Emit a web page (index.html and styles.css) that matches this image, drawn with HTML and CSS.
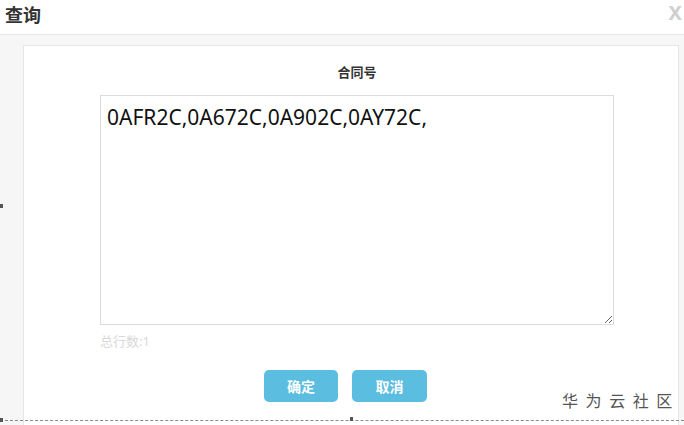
FILE: index.html
```html
<!DOCTYPE html>
<html>
<head>
    <meta charset="utf-8">
    <link rel="stylesheet" href="styles.css">
</head>
<body>
    <div class="dialog">
        <div class="head">
            <span class="title">查询</span>
            <span class="close">X</span>
        </div>
        <div class="content">
            <div class="panel">
                <div class="field-label">合同号</div>
                <textarea class="codes">0AFR2C,0A672C,0A902C,0AY72C,</textarea>
                <div class="count">总行数:1</div>
                <div class="actions">
                    <button class="btn">确定</button>
                    <button class="btn">取消</button>
                </div>
            </div>
        </div>
    </div>
    <div class="crop-line"></div>
    <div class="handle handle-left"></div>
    <div class="handle handle-mid"></div>
    <div class="handle handle-bottom"></div>
    <div class="watermark">华 为 云 社 区</div>
</body>
</html>
```

FILE: styles.css
```css
html, body {
    margin: 0;
    height: 425px;
    overflow: hidden;
}
body {
    position: relative;
    background: #fff;
    font-family: "Noto Sans", "Noto Sans CJK SC", sans-serif;
}
.dialog {
    display: flex;
    flex-direction: column;
    height: 425px;
}
.head {
    height: 35px;
    display: flex;
    justify-content: space-between;
    align-items: center;
    padding: 0 2px 0 5px;
    border-bottom: 1px solid #e8e8e8;
    box-sizing: border-box;
}
.title {
    font-size: 18px;
    font-weight: bold;
    color: #333;
    margin-top: -6px;
}
.close {
    font-size: 20px;
    font-weight: bold;
    color: #cfcfcf;
    margin-top: -10px;
}
.content {
    flex: 1;
    background: #f6f6f6;
    padding: 10px 5px 0 23px;
    display: flex;
}
.panel {
    flex: 1;
    background: #fff;
    border: 1px solid #e6e6e6;
    border-bottom: 0;
    display: flex;
    flex-direction: column;
    padding: 16px 0 0 76px;
}
.field-label {
    width: 514px;
    text-align: center;
    font-size: 13px;
    font-weight: bold;
    line-height: 20px;
    color: #333;
}
.codes {
    margin-top: 13px;
    width: 514px;
    height: 230px;
    box-sizing: border-box;
    border: 1px solid #dcdcdc;
    padding: 8px 6px;
    font-family: "Noto Sans", sans-serif;
    font-size: 21px;
    line-height: 27px;
    color: #111;
    resize: both;
    outline: none;
}
.count {
    margin-top: 7px;
    font-size: 13px;
    line-height: 18px;
    color: #d8d8d8;
}
.actions {
    margin-top: 20px;
    width: 491px;
    display: flex;
    justify-content: center;
    gap: 14px;
}
.btn {
    width: 74px;
    height: 32px;
    border: 0;
    border-radius: 5px;
    background: #5bbde0;
    color: #fff;
    font-family: "Noto Sans CJK SC", sans-serif;
    font-size: 14px;
    font-weight: bold;
}
.btn + .btn { width: 75px }
.crop-line {
    position: absolute;
    left: 0;
    right: 0;
    top: 420px;
    border-top: 1px dashed #8a8a8a;
}
.handle {
    position: absolute;
    width: 3px;
    height: 4px;
    background: #555;
}
.handle-left { left: 0; top: 204px }
.handle-mid { left: 350px; top: 417px }
.handle-bottom { left: 0; top: 418px }
.watermark {
    position: absolute;
    left: 558px;
    top: 388px;
    font-family: "Noto Sans CJK SC", sans-serif;
    font-size: 16px;
    letter-spacing: 2px;
    color: #555;
    background: #fff;
    padding: 0 4px;
}
```
